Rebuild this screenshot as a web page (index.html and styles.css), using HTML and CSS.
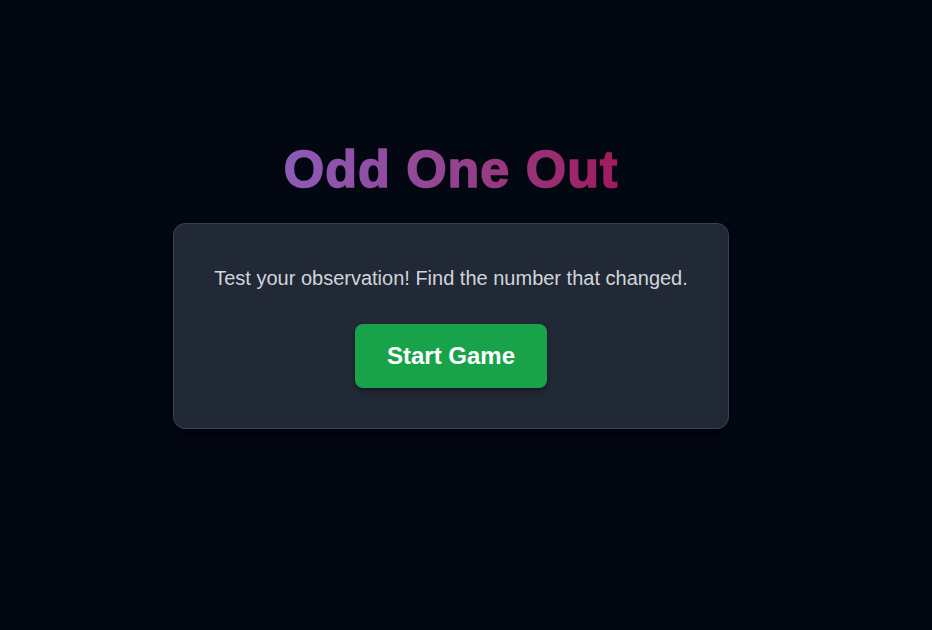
FILE: index.html
```html
<!DOCTYPE html>
<html lang="en">
<head>
<meta charset="utf-8">
<title>Odd One Out</title>
<link rel="stylesheet" href="styles.css">
</head>
<body>
<main class="app">
  <h1 class="title">Odd One Out</h1>
  <section class="card">
    <p class="intro">Test your observation! Find the number that changed.</p>
    <button class="start-btn">Start Game</button>
  </section>
</main>
</body>
</html>
```

FILE: styles.css
```css
html, body {
  margin: 0;
  padding: 0;
  background: #030712;
  height: 100%;
}
body {
  font-family: "Liberation Sans", Arial, sans-serif;
  color: #d1d5db;
}
.app {
  width: 902px;
  padding-top: 143px;
  display: flex;
  flex-direction: column;
  align-items: center;
}
.title {
  margin: 0 0 27px 0;
  font-size: 52px;
  line-height: 53px;
  font-weight: 900;
  letter-spacing: 1px;
  background: linear-gradient(90deg, #8c5bb8 0%, #93448f 50%, #a01c5c 100%);
  -webkit-background-clip: text;
  background-clip: text;
  color: transparent;
  -webkit-text-stroke: 1.6px transparent;
}
.card {
  background: #212936;
  border: 1px solid #394353;
  border-radius: 12px;
  padding: 40px;
  display: flex;
  flex-direction: column;
  align-items: center;
  box-shadow: 0 10px 15px -3px rgba(0,0,0,0.35), 0 4px 6px -4px rgba(0,0,0,0.3);
}
.intro {
  margin: 0 0 32px 0;
  font-size: 20px;
  line-height: 28px;
  color: #d1d5db;
}
.start-btn {
  font-family: "Liberation Sans", Arial, sans-serif;
  font-size: 24px;
  line-height: 32px;
  font-weight: 700;
  color: #ffffff;
  background: #18a34a;
  border: none;
  border-radius: 8px;
  padding: 16px 32px;
  box-shadow: 0 4px 6px -1px rgba(0,0,0,0.3), 0 2px 4px -2px rgba(0,0,0,0.3);
  cursor: pointer;
}
```
